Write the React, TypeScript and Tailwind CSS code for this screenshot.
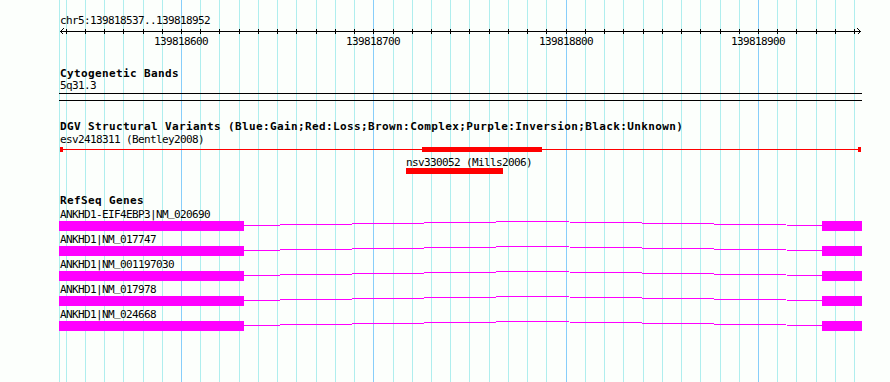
import React from "react";

const PX0 = 181;
const STEP = 19.233;
const gridXs: { x: number; major: boolean }[] = [];
for (let k = -6; k <= 35; k++) {
  gridXs.push({ x: Math.round(PX0 + k * STEP), major: k % 10 === 0 });
}
const majors = [
  { k: 0, label: "139818600" },
  { k: 10, label: "139818700" },
  { k: 20, label: "139818800" },
  { k: 30, label: "139818900" },
];

const genes: [string, string][] = [
  ["ANKHD1-EIF4EBP3|NM", "020690"],
  ["ANKHD1|NM", "017747"],
  ["ANKHD1|NM", "001197030"],
  ["ANKHD1|NM", "017978"],
  ["ANKHD1|NM", "024668"],
];

function Grid() {
  return (
    <svg
      className="absolute inset-0"
      width={890}
      height={382}
      shapeRendering="crispEdges"
    >
      <rect x={59} y={0} width={1} height={382} fill="#afeeee" />
      {gridXs.map((g) => (
        <rect
          key={g.x}
          x={g.x}
          y={0}
          width={1}
          height={382}
          fill={g.major ? "#87cefa" : "#afeeee"}
        />
      ))}
    </svg>
  );
}

function Ruler() {
  return (
    <svg width={890} height={21} shapeRendering="crispEdges" className="block">
      <rect x={60} y={4} width={800} height={1} fill="#000" />
      {gridXs.map((g) => (
        <rect key={g.x} x={g.x} y={2} width={1} height={5} fill="#000" />
      ))}
      <polyline points="63.5,1.5 60.5,4.5 63.5,7.5" fill="none" stroke="#000" strokeWidth={1} />
      <polyline points="857.5,1.5 860.5,4.5 857.5,7.5" fill="none" stroke="#000" strokeWidth={1} />
      {majors.map((m) => (
        <text
          key={m.k}
          x={Math.round(PX0 + m.k * STEP)}
          y={18}
          textAnchor="middle"
          fill="#000"
          shapeRendering="auto"
        >
          {m.label}
        </text>
      ))}
    </svg>
  );
}

function GeneRow({ pre, post }: { pre: string; post: string }) {
  return (
    <div>
      <div className="relative z-10 h-[12px] leading-[12px] pl-[60px] tracking-[-0.62px] whitespace-nowrap">
        {pre}
        <span className="relative -top-[2px]">_</span>
        {post}
      </div>
      <svg width={890} height={13} shapeRendering="crispEdges" className="block">
        <rect x={59} y={0} width={185} height={10} fill="#ff00ff" />
        <rect x={822} y={0} width={40} height={10} fill="#ff00ff" />
        <polyline
          points="244,4.5 533,0.5 822,4.5"
          fill="none"
          stroke="#ff00ff"
          strokeWidth={1}
        />
      </svg>
    </div>
  );
}

export default function App() {
  return (
    <div className="relative w-[890px] h-[382px] overflow-hidden bg-[#fcfffc] text-black text-[11px] font-['DejaVu_Sans_Mono',monospace]">
      <Grid />
      <div className="relative flex flex-col pt-[15px]">
        {/* Ruler */}
        <div className="h-[12px] leading-[12px] pl-[60px] tracking-[-0.62px] whitespace-nowrap">
          chr5:139818537..139818952
        </div>
        <div className="tracking-[-0.62px]">
          <Ruler />
        </div>

        {/* Cytogenetic Bands */}
        <div className="mt-[20px] h-[12px] leading-[12px] pl-[60px] font-bold tracking-[0.38px] whitespace-nowrap">
          Cytogenetic Bands
        </div>
        <div className="h-[12px] leading-[12px] pl-[60px] tracking-[-0.62px] whitespace-nowrap">
          5q31.3
        </div>
        <svg width={890} height={29} shapeRendering="crispEdges" className="block">
          <rect x={59} y={1} width={803} height={1} fill="#000" />
          <rect x={59} y={8} width={803} height={1} fill="#000" />
        </svg>

        {/* DGV */}
        <div className="h-[13px] leading-[12px] pl-[60px] font-bold tracking-[0.38px] whitespace-nowrap">
          DGV Structural Variants (Blue:Gain;Red:Loss;Brown:Complex;Purple:Inversion;Black:Unknown)
        </div>
        <div className="h-[12px] leading-[12px] pl-[60px] tracking-[-0.62px] whitespace-nowrap">
          esv2418311 (Bentley2008)
        </div>
        <svg
          width={890}
          height={49}
          shapeRendering="crispEdges"
          className="block tracking-[-0.62px]"
        >
          <rect x={60} y={3} width={801} height={1} fill="#ff0000" />
          <rect x={60} y={1} width={3} height={5} fill="#ff0000" />
          <rect x={858} y={1} width={3} height={5} fill="#ff0000" />
          <rect x={422} y={1} width={120} height={5} fill="#ff0000" />
          <text x={406} y={20} fill="#000" shapeRendering="auto">
            nsv330052 (Mills2006)
          </text>
          <rect x={406} y={22} width={97} height={6} fill="#ff0000" />
        </svg>

        {/* RefSeq Genes */}
        <div className="h-[14px] leading-[12px] pl-[60px] font-bold tracking-[0.38px] whitespace-nowrap">
          RefSeq Genes
        </div>
        {genes.map(([pre, post]) => (
          <GeneRow key={pre + post} pre={pre} post={post} />
        ))}
      </div>
    </div>
  );
}
